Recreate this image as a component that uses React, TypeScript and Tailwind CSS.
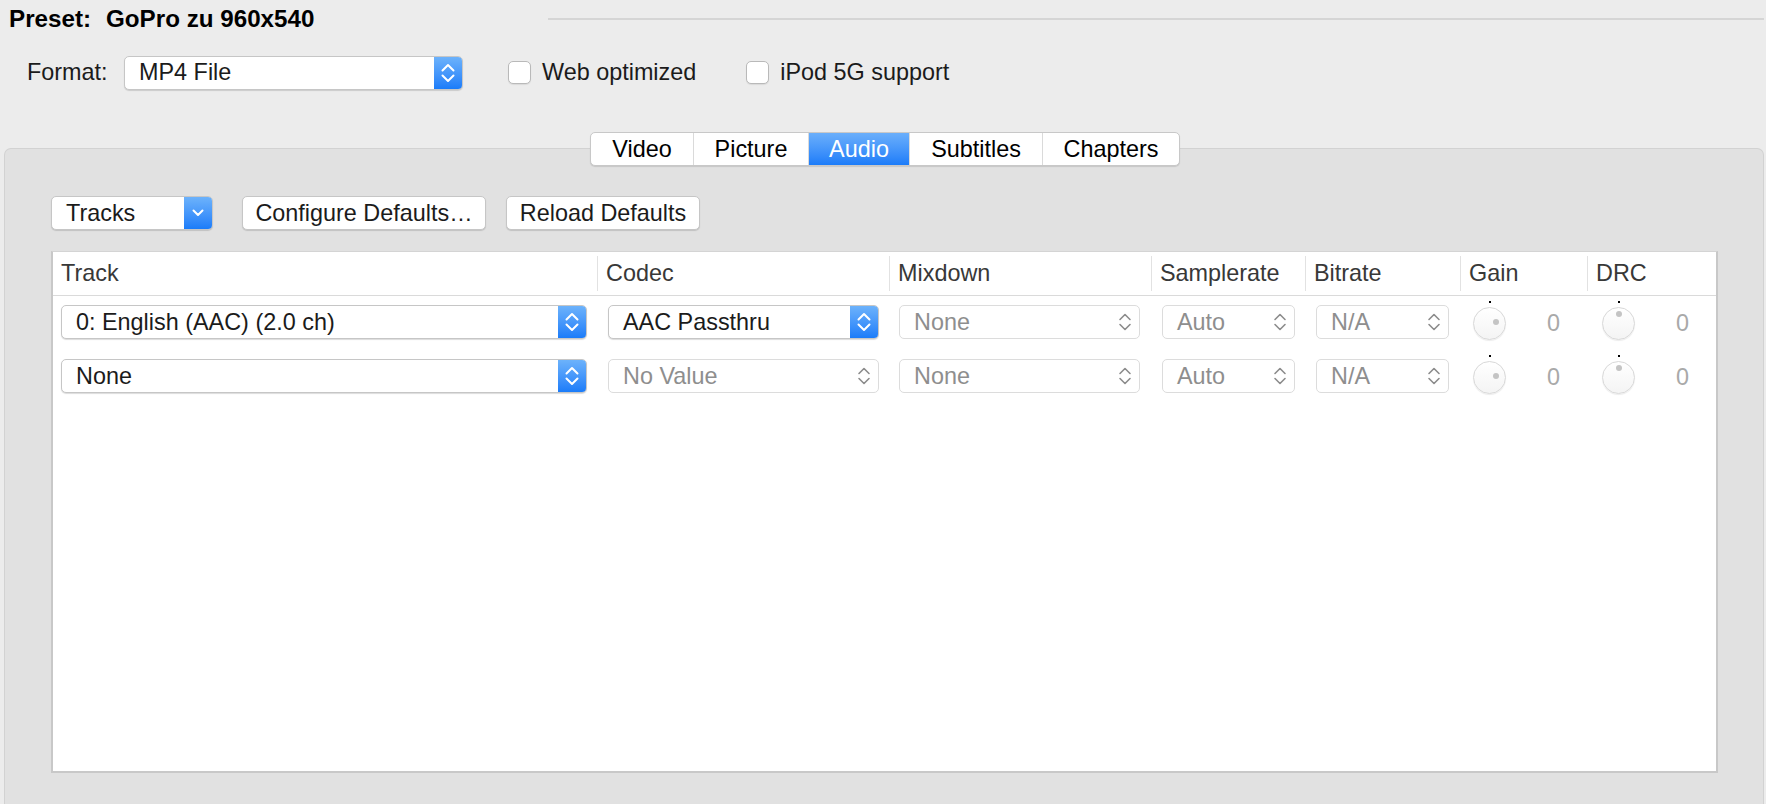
import React from "react";

function UpDown({ color = "#ffffff" }: { color?: string }) {
  return (
    <svg width="14" height="22" viewBox="0 0 14 22" fill="none" stroke={color} strokeWidth="2" strokeLinecap="round" strokeLinejoin="round">
      <path d="M1.5 8.5 L7 3 L12.5 8.5" />
      <path d="M1.5 13.5 L7 19 L12.5 13.5" />
    </svg>
  );
}

function UpDownGrey() {
  return (
    <svg width="14" height="22" viewBox="0 0 14 22" fill="none" stroke="#8c8c8c" strokeWidth="1.6" strokeLinecap="round" strokeLinejoin="round">
      <path d="M2 8.5 L7 3.5 L12 8.5" />
      <path d="M2 13.5 L7 18.5 L12 13.5" />
    </svg>
  );
}

function Down() {
  return (
    <svg width="14" height="12" viewBox="0 0 14 12" fill="none" stroke="#ffffff" strokeWidth="2" strokeLinecap="round" strokeLinejoin="round">
      <path d="M2.5 3.5 L7 8 L11.5 3.5" />
    </svg>
  );
}

function Popup({
  label,
  w,
  active = false,
  disabled = false,
  single = false,
}: {
  label: string;
  w: string;
  active?: boolean;
  disabled?: boolean;
  single?: boolean;
}) {
  return (
    <div
      className={`flex h-[34px] shrink-0 items-stretch overflow-hidden rounded-[5px] bg-white ${w} ${
        disabled
          ? "border border-[#dcdcdc]"
          : "border border-[#c6c6c6] shadow-[0_1px_1px_rgba(0,0,0,0.14)]"
      }`}
    >
      <div className={`flex flex-1 items-center pl-[14px] pt-px ${disabled ? "text-[#8e8e8e]" : "text-[#1b1b1b]"}`}>{label}</div>
      {active ? (
        <div className="flex w-[28px] items-center justify-center bg-linear-to-b from-[#6cb2fb] to-[#1a7cf9]">
          {single ? <Down /> : <UpDown />}
        </div>
      ) : (
        <div className="flex w-[28px] items-center justify-center">
          <UpDownGrey />
        </div>
      )}
    </div>
  );
}

function Button({ label, w }: { label: string; w: string }) {
  return (
    <div className={`flex h-[34px] shrink-0 items-center justify-center rounded-[5px] border border-[#c6c6c6] bg-white pt-px shadow-[0_1px_1px_rgba(0,0,0,0.14)] ${w}`}>
      {label}
    </div>
  );
}

function Checkbox({ label }: { label: string }) {
  return (
    <div className="flex items-center">
      <div className="h-[23px] w-[23px] rounded-[5px] border border-[#b9b9b9] bg-white shadow-[0_1px_1px_rgba(0,0,0,0.08)]" />
      <span className="ml-[11px]">{label}</span>
    </div>
  );
}

function Knob({ kind }: { kind: "gain" | "drc" }) {
  return (
    <div className="relative h-[33px] w-[33px] shrink-0">
      <div className="absolute left-[16px] top-[-6px] h-[2px] w-[2px] bg-black" />
      <div className="h-full w-full rounded-full border border-[#d8d8d8] bg-linear-to-b from-white to-[#f4f4f4] shadow-[0_1px_1px_rgba(0,0,0,0.08)]" />
      <div
        className={`absolute h-[6px] w-[6px] rounded-full bg-[#c4c4c4] blur-[0.6px] ${
          kind === "gain" ? "left-[20px] top-[12px]" : "left-[14px] top-[4px]"
        }`}
      />
    </div>
  );
}

function HeaderCell({ label, w, first = false }: { label: string; w: string; first?: boolean }) {
  return (
    <div className={`flex h-full shrink-0 items-center ${w}`}>
      {first ? null : <div className="h-[35px] w-px bg-[#e2e2e2]" />}
      <span className="ml-[8px] text-[#383838]">{label}</span>
    </div>
  );
}

function Row({ track, codec, codecActive }: { track: string; codec: string; codecActive: boolean }) {
  return (
    <div className="flex h-[54px] items-start pt-[9px]">
      <div className="flex w-[544px] shrink-0 pl-[8px]">
        <Popup label={track} w="w-[526px]" active />
      </div>
      <div className="flex w-[292px] shrink-0 pl-[11px]">
        <Popup label={codec} w="w-[271px]" active={codecActive} disabled={!codecActive} />
      </div>
      <div className="flex w-[262px] shrink-0 pl-[10px]">
        <Popup label="None" w="w-[241px]" disabled />
      </div>
      <div className="flex w-[154px] shrink-0 pl-[11px]">
        <Popup label="Auto" w="w-[133px]" disabled />
      </div>
      <div className="flex w-[155px] shrink-0 pl-[11px]">
        <Popup label="N/A" w="w-[133px]" disabled />
      </div>
      <div className="flex w-[127px] shrink-0 items-center pl-[13px] pt-[2px]">
        <Knob kind="gain" />
        <span className="ml-[41px] text-[#a9a9a9]">0</span>
      </div>
      <div className="flex w-[127px] shrink-0 items-center pl-[15px] pt-[2px]">
        <Knob kind="drc" />
        <span className="ml-[41px] text-[#a9a9a9]">0</span>
      </div>
    </div>
  );
}

export default function App() {
  const tabs: { label: string; w: string; sel?: boolean }[] = [
    { label: "Video", w: "w-[102px]" },
    { label: "Picture", w: "w-[115px]" },
    { label: "Audio", w: "w-[101px]", sel: true },
    { label: "Subtitles", w: "w-[133px]" },
    { label: "Chapters", w: "w-[137px]" },
  ];
  return (
    <div className="flex h-[804px] w-[1766px] flex-col overflow-hidden bg-[#ececec] font-['Liberation_Sans',Arial,sans-serif] text-[23.4px] leading-none text-[#1b1b1b]">
      {/* Preset row */}
      <div className="flex h-[38px] shrink-0 items-center">
        <div className="flex w-[548px] items-center pl-[9px] text-[24.2px] font-bold text-black">
          <span>Preset:</span>
          <span className="ml-[15px]">GoPro zu 960x540</span>
        </div>
        <div className="mr-[2px] h-[2px] flex-1 bg-[#d5d5d5]" />
      </div>

      {/* Format row */}
      <div className="mt-[17px] flex h-[35px] shrink-0 items-center">
        <div className="w-[124px] pl-[27px]">Format:</div>
        <Popup label="MP4 File" w="w-[339px]" active />
        <div className="ml-[45px]">
          <Checkbox label="Web optimized" />
        </div>
        <div className="ml-[50px]">
          <Checkbox label="iPod 5G support" />
        </div>
      </div>

      {/* Tabs */}
      <div className="relative z-10 mt-[42px] flex h-[34px] shrink-0 justify-center pl-[4px]">
        <div className="flex h-[34px] overflow-hidden rounded-[5px] border border-[#c8c8c8] bg-white shadow-[0_1px_1px_rgba(0,0,0,0.12)]">
          {tabs.map((t, i) => (
            <div
              key={t.label}
              className={`flex h-full items-center justify-center pt-px ${t.w} ${i > 0 ? "border-l border-[#dadada]" : ""} ${
                t.sel ? "bg-linear-to-b from-[#6aaffb] to-[#1b7cf9] text-white" : "text-black"
              }`}
            >
              {t.label}
            </div>
          ))}
        </div>
      </div>

      {/* Panel */}
      <div className="-mt-[18px] ml-[4px] flex w-[1760px] flex-1 flex-col rounded-t-[7px] border border-b-0 border-[#d2d2d2] bg-[#e1e1e1] pl-[46px] pt-[47px]">
        <div className="flex h-[34px] items-center">
          <Popup label="Tracks" w="w-[162px]" active single />
          <div className="ml-[29px]">
            <Button label="Configure Defaults…" w="w-[244px]" />
          </div>
          <div className="ml-[20px]">
            <Button label="Reload Defaults" w="w-[194px]" />
          </div>
        </div>

        <div className="mt-[21px] flex h-[522px] w-[1667px] flex-col border-2 border-t border-[#c8c8c8] border-t-[#d4d4d4] bg-white">
          <div className="flex h-[44px] shrink-0 border-b border-[#dadada]">
            <HeaderCell label="Track" w="w-[544px]" first />
            <HeaderCell label="Codec" w="w-[292px]" />
            <HeaderCell label="Mixdown" w="w-[262px]" />
            <HeaderCell label="Samplerate" w="w-[154px]" />
            <HeaderCell label="Bitrate" w="w-[155px]" />
            <HeaderCell label="Gain" w="w-[127px]" />
            <HeaderCell label="DRC" w="w-[127px]" />
          </div>
          <Row track="0: English (AAC) (2.0 ch)" codec="AAC Passthru" codecActive />
          <Row track="None" codec="No Value" codecActive={false} />
        </div>
      </div>
    </div>
  );
}
